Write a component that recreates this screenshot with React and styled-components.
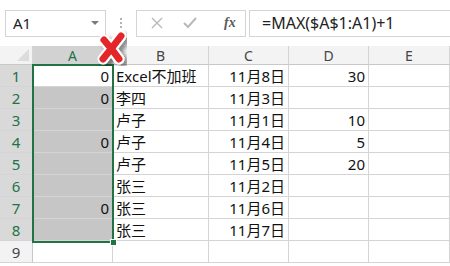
import React from 'react';
import styled, { createGlobalStyle } from 'styled-components';

const GlobalStyle = createGlobalStyle`
  html, body {
    margin: 0;
    padding: 0;
    background: #ffffff;
  }
  body {
    width: 450px;
    height: 266px;
    overflow: hidden;
    font-family: "Noto Sans", "Noto Sans CJK SC", sans-serif;
  }
`;

const Sheet = styled.div`
  position: relative;
  width: 450px;
  height: 266px;
  background: #ffffff;
  overflow: hidden;
`;

const FormulaBar = styled.div`
  display: flex;
  align-items: center;
  height: 46px;
  padding: 0 0 0 5px;
  box-sizing: border-box;
`;

const NameBox = styled.div`
  display: flex;
  align-items: center;
  justify-content: space-between;
  width: 101px;
  height: 27px;
  box-sizing: border-box;
  border: 1px solid #d4d4d4;
  padding: 0 6px 0 7px;
  font-size: 15px;
  color: #222;
`;

const Caret = styled.span`
  width: 0;
  height: 0;
  border-left: 4px solid transparent;
  border-right: 4px solid transparent;
  border-top: 4px solid #7a7a7a;
`;

const Dots = styled.div`
  display: flex;
  flex-direction: column;
  gap: 2px;
  margin: 0 14px 0 14px;
  span {
    width: 2px;
    height: 2px;
    background: #b4b4b4;
  }
`;

const ButtonBox = styled.div`
  display: flex;
  align-items: center;
  width: 110px;
  height: 27px;
  box-sizing: border-box;
  border: 1px solid #d4d4d4;
  padding: 0 0 0 14px;
  gap: 20px;
`;

const Fx = styled.span`
  font-family: "Liberation Serif", serif;
  font-style: italic;
  font-weight: bold;
  font-size: 14px;
  color: #5a5a5a;
  margin-left: 7px;
`;

const FormulaInput = styled.div`
  flex: 1;
  display: flex;
  align-items: center;
  height: 27px;
  margin-left: 3px;
  box-sizing: border-box;
  border: 1px solid #d4d4d4;
  border-right: none;
  padding-left: 12px;
  font-size: 16px;
  color: #222;
`;

const Grid = styled.div`
  display: grid;
  grid-template-columns: 33px 80px 96px 80px 80px 81px;
  grid-template-rows: 19px repeat(9, 22px);
`;

const Corner = styled.div`
  position: relative;
  background: #f3f3f3;
  border-right: 1px solid #d4d4d4;
  border-bottom: 1px solid #c8c8c8;
  box-sizing: border-box;
  &::after {
    content: '';
    position: absolute;
    right: 3px;
    bottom: 3px;
    width: 0;
    height: 0;
    border-left: 12px solid transparent;
    border-bottom: 12px solid #dcdcdc;
  }
`;

const ColHead = styled.div`
  display: flex;
  align-items: center;
  justify-content: center;
  box-sizing: border-box;
  background: ${p => (p.$active ? '#d2d2d2' : '#f3f3f3')};
  color: ${p => (p.$active ? '#217346' : '#444')};
  border-right: 1px solid #d4d4d4;
  border-bottom: 1px solid #c8c8c8;
  font-size: 14px;
`;

const RowHead = styled.div`
  display: flex;
  align-items: center;
  justify-content: center;
  box-sizing: border-box;
  background: ${p => (p.$active ? '#d9d9d9' : '#f3f3f3')};
  color: ${p => (p.$active ? '#217346' : '#444')};
  border-right: 1px solid #c8c8c8;
  border-bottom: 1px solid #d4d4d4;
  font-size: 15px;
`;

const Cell = styled.div`
  display: flex;
  align-items: center;
  justify-content: ${p => (p.$right ? 'flex-end' : 'flex-start')};
  box-sizing: border-box;
  padding: 0 3px 0 3px;
  background: ${p => (p.$sel ? '#c6c6c6' : '#ffffff')};
  border-right: 1px solid #d4d4d4;
  border-bottom: 1px solid #d4d4d4;
  font-size: 15px;
  color: #111;
  white-space: nowrap;
`;

const Selection = styled.div`
  position: absolute;
  left: 32px;
  top: 64px;
  width: 82px;
  height: 179px;
  box-sizing: border-box;
  border: 2px solid #217346;
  pointer-events: none;
  &::after {
    content: '';
    position: absolute;
    right: -5px;
    bottom: -5px;
    width: 5px;
    height: 5px;
    background: #217346;
    border: 1px solid #ffffff;
  }
`;

const Mark = styled.svg`
  position: absolute;
  left: 96px;
  top: 30px;
`;

const rows = [
  ['0', 'Excel不加班', '11月8日', '30'],
  ['0', '李四', '11月3日', ''],
  ['', '卢子', '11月1日', '10'],
  ['0', '卢子', '11月4日', '5'],
  ['', '卢子', '11月5日', '20'],
  ['', '张三', '11月2日', ''],
  ['0', '张三', '11月6日', ''],
  ['', '张三', '11月7日', ''],
  null,
];

export default function App() {
  return (
    <Sheet>
      <GlobalStyle />
      <FormulaBar>
        <NameBox>
          A1
          <Caret />
        </NameBox>
        <Dots>
          <span />
          <span />
          <span />
        </Dots>
        <ButtonBox>
          <svg width="12" height="12" viewBox="0 0 12 12">
            <path d="M1 1 L11 11 M11 1 L1 11" stroke="#b9b9b9" strokeWidth="1.4" />
          </svg>
          <svg width="14" height="12" viewBox="0 0 14 12">
            <path d="M1 6 L5 10 L13 1" stroke="#b9b9b9" strokeWidth="2" fill="none" />
          </svg>
          <Fx>fx</Fx>
        </ButtonBox>
        <FormulaInput>=MAX($A$1:A1)+1</FormulaInput>
      </FormulaBar>
      <Grid>
        <Corner />
        {['A', 'B', 'C', 'D', 'E'].map(c => (
          <ColHead key={c} $active={c === 'A'}>
            {c}
          </ColHead>
        ))}
        {rows.map((r, i) => (
          <React.Fragment key={i}>
            <RowHead $active={i < 8}>{i + 1}</RowHead>
            <Cell $right $sel={i > 0 && i < 8}>
              {r ? r[0] : ''}
            </Cell>
            <Cell>{r ? r[1] : ''}</Cell>
            <Cell $right>{r ? r[2] : ''}</Cell>
            <Cell $right>{r ? r[3] : ''}</Cell>
            <Cell />
          </React.Fragment>
        ))}
      </Grid>
      <Selection />
      <Mark width="46" height="42" viewBox="0 0 46 42">
        <defs>
          <filter id="sh" x="-30%" y="-30%" width="160%" height="160%">
            <feDropShadow dx="4" dy="3" stdDeviation="2" floodColor="#000" floodOpacity="0.45" />
          </filter>
        </defs>
        <g filter="url(#sh)" strokeLinecap="round" fill="none">
          <path d="M8 10 Q16 19 23 29" stroke="#fff" strokeWidth="11" />
          <path d="M25 6 Q16 18 7 29" stroke="#fff" strokeWidth="11" />
          <path d="M8 10 Q16 19 23 29" stroke="#e3262b" strokeWidth="7" />
          <path d="M25 6 Q16 18 7 29" stroke="#e3262b" strokeWidth="7" />
        </g>
      </Mark>
    </Sheet>
  );
}
